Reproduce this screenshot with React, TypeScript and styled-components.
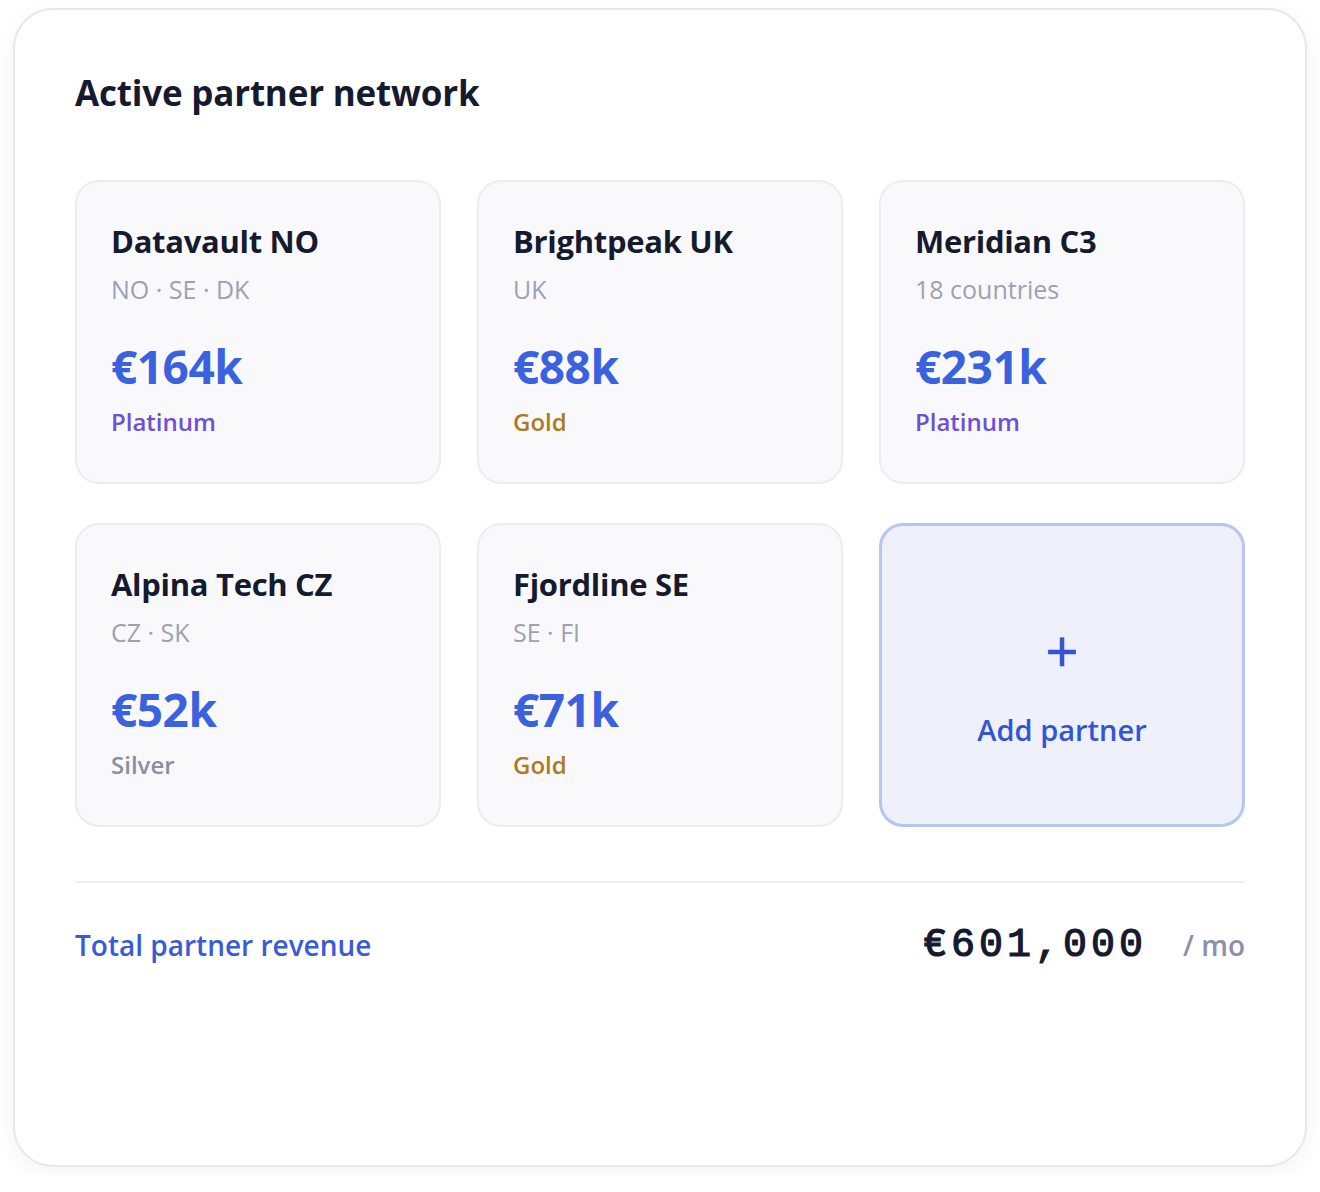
import styled, { createGlobalStyle } from "styled-components";

const GlobalStyle = createGlobalStyle`
  html, body {
    margin: 0;
    background: #ffffff;
  }
  body {
    font-family: "Open Sans", "Noto Sans", sans-serif;
    color: #161a2e;
  }
  #root {
    padding: 8px 13px;
  }
`;

const Panel = styled.section`
  box-sizing: border-box;
  height: 1159px;
  border: 2px solid #e6e8f0;
  border-radius: 40px;
  background: #ffffff;
  box-shadow: 0 6px 24px rgba(30, 40, 80, 0.05);
  padding: 60px 60px 0 60px;
`;

const Title = styled.h2`
  margin: 0 0 64px;
  font-size: 35px;
  line-height: 46px;
  font-weight: 700;
  color: #161a2e;
  letter-spacing: -0.2px;
`;

const Grid = styled.div`
  display: grid;
  grid-template-columns: repeat(3, 1fr);
  gap: 39px 36px;
`;

const PartnerCard = styled.div`
  box-sizing: border-box;
  height: 304px;
  padding: 38px 34px 0;
  background: #f9f9fc;
  border: 2px solid #ececf3;
  border-radius: 24px;
  display: flex;
  flex-direction: column;
`;

const Name = styled.div`
  font-size: 31px;
  line-height: 42px;
  font-weight: 700;
  color: #161a2e;
  letter-spacing: -0.3px;
`;

const Region = styled.div`
  margin-top: 10px;
  font-size: 25px;
  line-height: 34px;
  color: #9ca1b3;
`;

const Revenue = styled.div`
  margin-top: 32px;
  font-size: 46px;
  line-height: 56px;
  font-weight: 700;
  color: #3a62df;
  letter-spacing: -0.5px;
`;

const tierColors: Record<string, string> = {
  Platinum: "#6d4fd9",
  Gold: "#ad7a1e",
  Silver: "#8a8f9e",
};

const Tier = styled.div<{ $tier: string }>`
  margin-top: 12px;
  font-size: 24px;
  line-height: 32px;
  font-weight: 600;
  color: ${(p) => tierColors[p.$tier]};
`;

const AddCard = styled.button`
  box-sizing: border-box;
  height: 304px;
  background: #eef0fc;
  border: 3px solid #b7c5f3;
  border-radius: 24px;
  display: flex;
  flex-direction: column;
  align-items: center;
  justify-content: center;
  gap: 35px;
  color: #3354d4;
  font-family: inherit;
  cursor: pointer;
  padding: 27px 0 0;
`;

const Plus = styled.span`
  font-size: 58px;
  line-height: 48px;
  font-weight: 400;
  -webkit-text-stroke: 0.6px #3354d4;
`;

const AddLabel = styled.span`
  font-size: 29px;
  line-height: 40px;
  font-weight: 600;
`;

const Divider = styled.hr`
  margin: 54px 0 0;
  border: none;
  border-top: 2px solid #eeeff4;
`;

const TotalRow = styled.div`
  display: flex;
  align-items: baseline;
  justify-content: space-between;
  margin-top: 40px;
`;

const TotalLabel = styled.div`
  font-size: 28px;
  font-weight: 600;
  color: #3a5bd6;
`;

const TotalValue = styled.div`
  display: flex;
  align-items: baseline;
  gap: 36px;
`;

const Amount = styled.span`
  font-family: "Liberation Mono", "DejaVu Sans Mono", monospace;
  font-size: 40px;
  font-weight: 400;
  -webkit-text-stroke: 1.2px #161a2e;
  letter-spacing: 4px;
  color: #161a2e;
`;

const PerMonth = styled.span`
  font-size: 28px;
  font-weight: 600;
  color: #8b91a8;
`;

const partners = [
  { name: "Datavault NO", region: "NO · SE · DK", revenue: "€164k", tier: "Platinum" },
  { name: "Brightpeak UK", region: "UK", revenue: "€88k", tier: "Gold" },
  { name: "Meridian C3", region: "18 countries", revenue: "€231k", tier: "Platinum" },
  { name: "Alpina Tech CZ", region: "CZ · SK", revenue: "€52k", tier: "Silver" },
  { name: "Fjordline SE", region: "SE · FI", revenue: "€71k", tier: "Gold" },
];

export default function App() {
  return (
    <>
      <GlobalStyle />
      <Panel>
        <Title>Active partner network</Title>
        <Grid>
          {partners.map((p) => (
            <PartnerCard key={p.name}>
              <Name>{p.name}</Name>
              <Region>{p.region}</Region>
              <Revenue>{p.revenue}</Revenue>
              <Tier $tier={p.tier}>{p.tier}</Tier>
            </PartnerCard>
          ))}
          <AddCard type="button">
            <Plus>+</Plus>
            <AddLabel>Add partner</AddLabel>
          </AddCard>
        </Grid>
        <Divider />
        <TotalRow>
          <TotalLabel>Total partner revenue</TotalLabel>
          <TotalValue>
            <Amount>€601,000</Amount>
            <PerMonth>/ mo</PerMonth>
          </TotalValue>
        </TotalRow>
      </Panel>
    </>
  );
}
